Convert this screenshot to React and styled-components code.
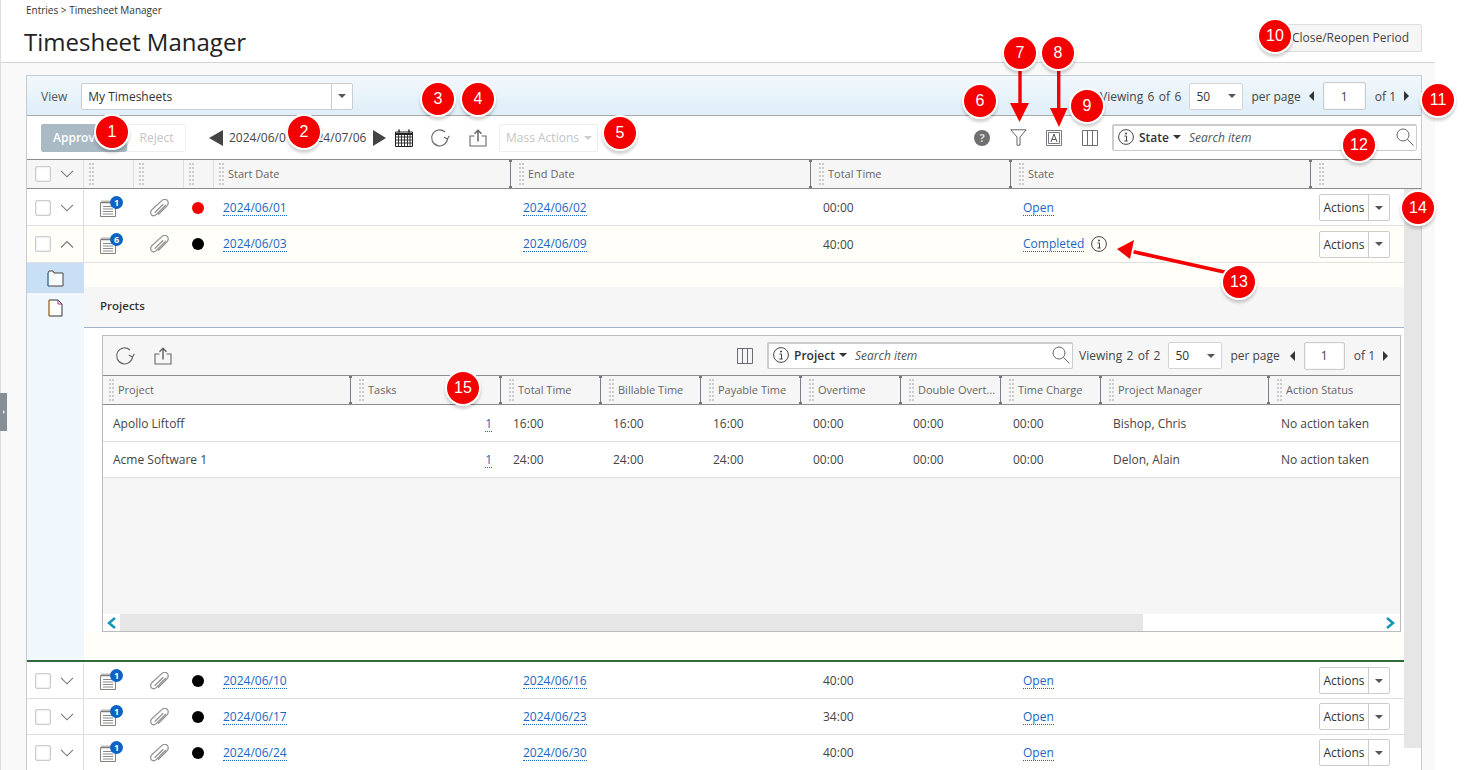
import React from "react";
import styled, { createGlobalStyle } from "styled-components";

const GlobalStyle = createGlobalStyle`
  html, body {
    margin: 0;
    height: 770px;
    overflow: hidden;
    background: #fff;
    font-family: "Open Sans", "Liberation Sans", sans-serif;
    font-size: 12px;
    color: #444;
  }
  * { box-sizing: border-box; }
`;

const Shell = styled.div`
  position: relative;
  width: 1435px;
  height: 770px;
  background: #f9f9f9;
  border-left: 1px solid #ddd;
`;

const PageHead = styled.header`
  height: 63px;
  background: #fff;
  border-bottom: 1px solid #d4d4d4;
  padding: 4px 13px 0 23px;
  display: flex;
  justify-content: space-between;
  align-items: flex-start;
`;

const Crumbs = styled.div`
  font-size: 10px;
  line-height: 13px;
  margin-left: 2px;
  color: #333;
`;

const Title = styled.h1`
  margin: 8px 0 0;
  font-size: 24px;
  line-height: 34px;
  font-weight: 400;
  color: #222;
`;

const PeriodButton = styled.button`
  margin-top: 20px;
  width: 142px;
  height: 28px;
  background: #f6f6f6;
  border: 1px solid #ddd;
  border-radius: 2px;
  font: 12px "Open Sans", sans-serif;
  color: #444;
  text-align: right;
  padding: 0 12px 2px 0;
`;

const Panel = styled.section`
  margin: 12px 13px 0 25px;
  border: 1px solid #c4ccd2;
  border-bottom: 0;
  background: #fff;
  height: 695px;
  overflow: hidden;
`;

const TopBar = styled.div`
  height: 40px;
  display: flex;
  align-items: center;
  justify-content: space-between;
  padding: 1px 12px 0 14px;
  background: linear-gradient(#f1f8fc, #dfeef8);
  border-bottom: 1px solid #aaa;
`;

const Inline = styled.div`
  display: flex;
  align-items: center;
  gap: ${(p) => p.$gap || 0}px;
`;

const ViewLabel = styled.span`
  margin-right: 1px;
  color: #555;
`;

const ViewSelect = styled.div`
  width: 272px;
  height: 27px;
  display: flex;
  align-items: center;
  background: #fff;
  border: 1px solid #ccc;
  border-radius: 2px;
  padding-left: 6px;
  color: #333;
  & > span:first-child { flex: 1; }
`;

const CaretCell = styled.span`
  width: 21px;
  height: 100%;
  display: flex;
  align-items: center;
  justify-content: center;
  border-left: 1px solid #ccc;
`;

const Caret = styled.i`
  display: inline-block;
  width: 0;
  height: 0;
  border-left: 4px solid transparent;
  border-right: 4px solid transparent;
  border-top: 4px solid ${(p) => p.$color || "#555"};
`;

const Pager = styled.div`
  display: flex;
  align-items: center;
  color: #444;
`;

const ViewingText = styled.span`
  word-spacing: 1.3px;
  margin-left: 6px;
`;

const PageSize = styled.div`
  width: 54px;
  height: 27px;
  margin: 0 8px;
  background: #fff;
  border: 1px solid #d4d4d4;
  border-radius: 2px;
  display: flex;
  align-items: center;
  justify-content: space-between;
  padding: 0 6px;
  color: #333;
`;

const PageInput = styled.div`
  width: ${(p) => p.$w}px;
  height: 28px;
  margin: 0 9px 0 9px;
  background: #fff;
  border: 1px solid #ccc;
  border-radius: 2px;
  box-shadow: inset 0 0 2px #ddd;
  display: flex;
  align-items: center;
  justify-content: center;
`;

const Tri = styled.i`
  display: inline-block;
  width: 0;
  height: 0;
  border-top: ${(p) => p.$s}px solid transparent;
  border-bottom: ${(p) => p.$s}px solid transparent;
  ${(p) => (p.$left ? "border-right" : "border-left")}: ${(p) => p.$w}px solid ${(p) => p.$c || "#333"};
`;

const Toolbar = styled.div`
  height: 44px;
  display: flex;
  align-items: center;
  justify-content: space-between;
  padding: 0 4px 0 14px;
  background: #fff;
  border-bottom: 1px solid #8c8c8c;
`;

const Approve = styled.button`
  width: 86px;
  height: 28px;
  background: #a9bac4;
  border: 0;
  border-radius: 2px;
  color: #fff;
  font: 600 12px "Open Sans", sans-serif;
  text-align: left;
  padding-left: 12px;
`;

const GhostButton = styled.button`
  height: 28px;
  width: ${(p) => p.$w}px;
  margin-left: ${(p) => p.$ml || 0}px;
  background: #fff;
  border: 1px solid #eee;
  border-radius: 2px;
  color: #c4c4c4;
  font: 12px "Open Sans", sans-serif;
  white-space: nowrap;
  display: flex;
  align-items: center;
  justify-content: center;
  gap: 5px;
  padding: 0;
`;

const DateRange = styled.div`
  display: flex;
  align-items: center;
  gap: 6px;
  margin-left: 23px;
  color: #444;
  & > span { margin-right: 1px; }
`;

const IconBtn = styled.span`
  display: inline-flex;
  margin-left: ${(p) => p.$ml || 0}px;
`;

const SearchBox = styled.div`
  width: ${(p) => p.$w}px;
  height: 27px;
  display: flex;
  align-items: center;
  background: #fff;
  border: 1px solid #ccc;
  border-top-width: 2px;
  border-left-width: 2px;
  border-radius: 2px;
  padding: 0 2px 2px 4px;
`;

const SearchField = styled.b`
  font-weight: 600;
  color: #333;
  margin: 0 4px 0 5px;
`;

const SearchHint = styled.em`
  flex: 1;
  margin-left: 8px;
  font-size: 12px;
  color: #555;
`;

const Head = styled.div`
  display: grid;
  grid-template-columns: ${(p) => p.$cols};
  height: 29px;
  padding-left: ${(p) => (p.$inset ? 1 : 0)}px;
  background: #f6f6f6;
  border-bottom: 1px solid #8c8c8c;
`;

const HeadCell = styled.div`
  position: relative;
  display: flex;
  align-items: center;
  padding: 0 0 2px 14px;
  color: #666;
  font-size: 11px;
  white-space: nowrap;
  ${(p) => p.$line && "border-right: 1px solid #ddd;"}
  ${(p) => p.$plain && "padding: 0 0 0 8px; gap: 9px;"}
`;

const Grip = styled.i`
  position: absolute;
  left: 5px;
  top: 3px;
  bottom: 3px;
  width: 5px;
  border-left: 2px dotted #ccc;
  border-right: 2px dotted #ccc;
`;

const Handle = styled.i`
  position: absolute;
  left: -4px;
  top: 0;
  bottom: 0;
  width: 1px;
  background: #85798f;
  &::before, &::after {
    content: "";
    position: absolute;
    left: -1px;
    width: 3px;
    height: 2px;
    background: #777;
  }
  &::before { top: 0; }
  &::after { bottom: 0; }
`;

const Check = styled.span`
  width: 16px;
  height: 16px;
  flex: none;
  background: #fff;
  border: 1px solid #ccc;
  border-radius: 2px;
  box-shadow: inset 0 0 2px #ccc;
`;

const Body = styled.div`
  display: flex;
  align-items: flex-start;
`;

const Rows = styled.div`
  width: 1377px;
`;

const ScrollTrack = styled.div`
  width: 17px;
  height: 559px;
  background: #e6e6e6;
`;

const Row = styled.div`
  display: grid;
  grid-template-columns: ${(p) => p.$cols};
  height: ${(p) => (p.$short ? 36 : 37)}px;
  padding-left: ${(p) => (p.$inset ? 1 : 0)}px;
  padding-top: ${(p) => (p.$nudge ? 1 : 0)}px;
  align-items: center;
  background: ${(p) => (p.$cream ? "#fffef8" : "#fff")};
  border-bottom: 1px solid #e0e0e0;
`;

const SelectCell = styled.div`
  height: 100%;
  display: flex;
  align-items: center;
  gap: 9px;
  padding-left: 8px;
  border-right: 1px solid #ddd;
`;

const IconCell = styled.div`
  display: flex;
  justify-content: center;
  padding-right: ${(p) => p.$shift || 0}px;
`;

const NoteWrap = styled.span`
  position: relative;
  display: inline-flex;
  margin-top: 2px;
`;

const Badge = styled.b`
  position: absolute;
  left: 10px;
  top: -4px;
  width: 13px;
  height: 13px;
  border-radius: 50%;
  background: #0b63c4;
  color: #fff;
  font-size: 9px;
  font-weight: 700;
  line-height: 13px;
  text-align: center;
`;

const Dot = styled.i`
  width: 12px;
  height: 12px;
  border-radius: 50%;
  background: ${(p) => p.$c};
`;

const TextCell = styled.div`
  padding-left: 9px;
  color: #444;
  display: flex;
  align-items: center;
  gap: 7px;
  ${(p) => p.$end && "justify-content: flex-end; padding: 0 12px 0 0;"}
`;

const Link = styled.a`
  color: #1a66c4;
  border-bottom: 1px dotted #1a66c4;
  line-height: 15px;
`;

const ActionsCell = styled.div`
  padding-left: 5px;
`;

const ActionsBtn = styled.div`
  width: 71px;
  height: 27px;
  display: flex;
  align-items: center;
  background: #fff;
  border: 1px solid #ccc;
  border-radius: 2px;
  color: #333;
  & > span:first-child { width: 48px; text-align: center; }
`;

const Expanded = styled.div`
  display: flex;
  height: 399px;
  border-bottom: 2px solid #2d6b3a;
`;

const Rail = styled.div`
  width: 57px;
  flex: none;
  background: #f0f8fd;
`;

const RailTab = styled.div`
  height: 30px;
  display: flex;
  align-items: center;
  justify-content: center;
  background: ${(p) => (p.$on ? "#c8dff5" : "transparent")};
`;

const Detail = styled.div`
  flex: 1;
  min-width: 0;
  background: #fffef8;
  padding-top: 24px;
`;

const DetailHead = styled.div`
  height: 41px;
  padding: 0 0 4px 16px;
  display: flex;
  align-items: center;
  background: #f6f6f6;
  border-bottom: 1px solid #a3b3c7;
  font-weight: 600;
  font-size: 11.5px;
  color: #333;
`;

const DetailBody = styled.div`
  background: #fff;
  padding: 7px 3px 0 18px;
  height: 304px;
`;

const SubPanel = styled.div`
  height: 297px;
  background: #f6f6f6;
  border: 1px solid #bbb;
  display: flex;
  flex-direction: column;
`;

const SubBar = styled.div`
  height: 40px;
  display: flex;
  align-items: center;
  justify-content: space-between;
  padding: 0 12px 0 12px;
  border-bottom: 1px solid #8c8c8c;
`;

const Spacer = styled.div`
  flex: 1;
`;

const HScroll = styled.div`
  height: 17px;
  display: flex;
  align-items: center;
  background: #fff;
`;

const HThumb = styled.div`
  width: 1023px;
  height: 100%;
  margin-left: 17px;
  background: #e6e6e6;
`;

const HEnd = styled.span`
  position: absolute;
  top: 50%;
  transform: translateY(-50%);
  display: inline-flex;
  ${(p) => (p.$right ? "right: 4px;" : "left: 3px;")}
`;

const HScrollWrap = styled.div`
  position: relative;
`;

const EdgeTab = styled.div`
  position: absolute;
  left: -1px;
  top: 393px;
  width: 7px;
  height: 38px;
  background: #878f96;
  display: flex;
  align-items: center;
  justify-content: center;
  &::after {
    content: "";
    width: 0;
    height: 0;
    border-top: 2px solid transparent;
    border-bottom: 2px solid transparent;
    border-left: 2px solid #eee;
  }
`;

const Marker = styled.div`
  position: absolute;
  left: ${(p) => p.$x - 1 - 16}px;
  top: ${(p) => p.$y - 16}px;
  width: 32px;
  height: 32px;
  border-radius: 50%;
  background: #f40000;
  color: #fff;
  font-family: "Liberation Sans", Arial, sans-serif;
  font-size: 16px;
  line-height: 32px;
  text-align: center;
  box-shadow: 0 0 0 2px #fff, 0 3px 3px 2px rgba(0, 0, 0, 0.18);
`;

const ArrowLayer = styled.svg`
  position: absolute;
  left: -1px;
  top: 0;
  pointer-events: none;
`;

// icons
const Chevron = ({ up }) => (
  <svg width="14" height="8" viewBox="0 0 14 8" fill="none" stroke="#777" strokeWidth="1.1">
    <path d={up ? "M1 7.5 7 1.5l6 6" : "M1 .8l6 6 6-6"} />
  </svg>
);
const NoteIcon = () => (
  <svg width="17" height="17" viewBox="0 0 17 17" fill="none">
    <path d="M.5 2.500h15v14H.5z" fill="#fff" stroke="#8a7f76" />
    <path d="M2 .5v3M4 .5v3M6 .5v3M8 .5v3M10 .5v3" stroke="#777" />
    <path d="M3 6.500h10M3 9h10M3 11.500h10M3 14h10" stroke="#8a8a8a" />
  </svg>
);
const ClipIcon = () => (
  <svg width="19" height="18" viewBox="1 .4 16.500 15.400" fill="none" stroke="#939393" strokeWidth="1.100">
    <path d="M14.800 5.500 6.600 13.600c-1.300 1.300-3.200 1.400-4.300.3s-1-3 .3-4.300L11 1.900c1.500-1.500 3.800-1.600 5-.4s1.100 3.500-.4 5L8 14" />
    <path d="M12.500 4.800 5 12.200" />
  </svg>
);
const Refresh = () => (
  <svg width="20" height="20" viewBox="0 0 20 20" fill="none" stroke="#666" strokeWidth="1.100">
    <path d="M17.600 10a8 8 0 1 1-2.600-6" />
    <path d="M13.800 9.400l3.800 1.600 1.600-3.400" transform="rotate(8 17 9)" />
  </svg>
);
const Share = () => (
  <svg width="18" height="18" viewBox="0 0 18 18" fill="none" stroke="#666" strokeWidth="1.100">
    <path d="M5.500 7H1v10h16V7h-4.500" />
    <path d="M9 12.500V1.500M5.500 4.800 9 1.300l3.500 3.500" strokeWidth="1.500" />
  </svg>
);
const Calendar = () => (
  <svg width="18" height="18" viewBox="0 0 18 18" fill="none" stroke="#222">
    <path d="M.5 3h17v14.500H.5z" />
    <path d="M.5 5h17" strokeWidth="2" />
    <path d="M.5 8h17M.5 11h17M.5 14h17M3.500 5v12M6.500 5v12M9.500 5v12M12.500 5v12M15 5v12" strokeWidth=".9" />
    <path d="M4 .5v3M14 .5v3" strokeWidth="1.500" />
  </svg>
);
const Help = () => (
  <svg width="16" height="16" viewBox="0 0 16 16">
    <circle cx="8" cy="8" r="8" fill="#6f6f6f" />
    <text x="8" y="12" textAnchor="middle" fontSize="11" fontWeight="700" fontFamily="Open Sans, sans-serif" fill="#ddd">?</text>
  </svg>
);
const Funnel = () => (
  <svg width="17" height="17" viewBox="0 0 17 17" fill="none" stroke="#666">
    <path d="M.8.8h15.400L10 8v8.200H7V8z" />
  </svg>
);
const AutoBox = () => (
  <svg width="16" height="16" viewBox="0 0 16 16" fill="none" stroke="#7a7a86">
    <path d="M.5.5h15v15H.500z" />
    <path d="M2.500 2.500h11v11h-11z" />
    <path d="M5 12l3-8 3 8M6 9.500h4" stroke="#555" />
  </svg>
);
const Columns = () => (
  <svg width="16" height="16" viewBox="0 0 16 16" fill="none" stroke="#6e6a78">
    <path d="M.5.5h15v15H.500zM5.500.5v15M10.500.5v15" />
  </svg>
);
const InfoIcon = ({ size = 16 }) => (
  <svg width={size} height={size} viewBox="0 0 16 16" fill="none" stroke="#444">
    <circle cx="8" cy="8" r="7.400" />
    <circle cx="8" cy="4.500" r="1" fill="#444" stroke="none" />
    <path d="M6.500 7h2v5M6.300 12h3.400" />
  </svg>
);
const Lens = () => (
  <svg width="18" height="18" viewBox="0 0 18 18" fill="none" stroke="#666">
    <circle cx="7" cy="7" r="6" />
    <path d="M11.500 11.500l6 6" />
  </svg>
);
const Folder = () => (
  <svg width="17" height="17" viewBox="0 0 17 17" fill="none">
    <path d="M1 3V16h15V3H7L6 1H2z" fill="#f8fbfe" stroke="#444" />
    <path d="M1 3v13" stroke="#3f8fd8" />
  </svg>
);
const FileIcon = () => (
  <svg width="15" height="18" viewBox="0 0 15 18" fill="none">
    <path d="M1 1h9l4 4v12H1z" fill="#fff" stroke="#333" />
    <path d="M1 1v16" stroke="#e09a3a" />
    <path d="M10 1v4h4" stroke="#a0308a" />
  </svg>
);
const Teal = ({ right }) => (
  <svg width="11" height="12" viewBox="0 0 11 12" fill="none" stroke="#1197b8" strokeWidth="2.500">
    <path d={right ? "M2 1l6 5-6 5" : "M9 1 3 6l6 5"} />
  </svg>
);

const mainCols = "57px 50px 50px 30px 300px 300px 200px 300px 1fr";
const subCols = "250px 150px 100px 100px 100px 100px 100px 100px 168px 1fr";

const timesheets = [
  { start: "2024/06/01", end: "2024/06/02", time: "00:00", state: "Open", notes: 1, dot: "#f40000", nudge: true },
  { start: "2024/06/03", end: "2024/06/09", time: "40:00", state: "Completed", notes: 6, dot: "#000", open: true },
  { start: "2024/06/10", end: "2024/06/16", time: "40:00", state: "Open", notes: 1, dot: "#000", nudge: true },
  { start: "2024/06/17", end: "2024/06/23", time: "34:00", state: "Open", notes: 1, dot: "#000", short: true },
  { start: "2024/06/24", end: "2024/06/30", time: "40:00", state: "Open", notes: 1, dot: "#000", short: true },
];

const subHeads = ["Project", "Tasks", "Total Time", "Billable Time", "Payable Time", "Overtime", "Double Overt...", "Time Charge", "Project Manager", "Action Status"];
const projects = [
  ["Apollo Liftoff", "1", "16:00", "16:00", "16:00", "00:00", "00:00", "00:00", "Bishop, Chris", "No action taken"],
  ["Acme Software 1", "1", "24:00", "24:00", "24:00", "00:00", "00:00", "00:00", "Delon, Alain", "No action taken"],
];

const markers = [
  [1, 112, 132], [2, 304, 132], [3, 438, 99], [4, 478, 99], [5, 620, 133],
  [6, 980, 101], [7, 1020, 53], [8, 1058, 53], [9, 1087, 106], [10, 1275, 36],
  [11, 1438, 100], [12, 1359, 145], [13, 1239, 282], [14, 1418, 208], [15, 463, 388],
];

const TimesheetRow = ({ item }) => (
  <Row $cols={mainCols} $cream={item.open} $short={item.short} $nudge={item.nudge}>
    <SelectCell>
      <Check />
      <Chevron up={item.open} />
    </SelectCell>
    <IconCell $shift={1}>
      <NoteWrap>
        <NoteIcon />
        <Badge>{item.notes}</Badge>
      </NoteWrap>
    </IconCell>
    <IconCell>
      <ClipIcon />
    </IconCell>
    <IconCell $shift={2}>
      <Dot $c={item.dot} />
    </IconCell>
    <TextCell><Link>{item.start}</Link></TextCell>
    <TextCell><Link>{item.end}</Link></TextCell>
    <TextCell>{item.time}</TextCell>
    <TextCell>
      <Link>{item.state}</Link>
      {item.open && <InfoIcon />}
    </TextCell>
    <ActionsCell>
      <ActionsBtn>
        <span>Actions</span>
        <CaretCell><Caret /></CaretCell>
      </ActionsBtn>
    </ActionsCell>
  </Row>
);

const ProjectsDetail = () => (
  <Expanded>
    <Rail>
      <RailTab $on><Folder /></RailTab>
      <RailTab><FileIcon /></RailTab>
    </Rail>
    <Detail>
      <DetailHead>Projects</DetailHead>
      <DetailBody>
        <SubPanel>
          <SubBar>
            <Inline $gap={19}>
              <Refresh />
              <Share />
            </Inline>
            <Inline>
              <Columns />
              <IconBtn $ml={14} />
              <SearchBox $w={306}>
                <InfoIcon size={16} />
                <SearchField>Project</SearchField>
                <Caret $color="#333" />
                <SearchHint>Search item</SearchHint>
                <Lens />
              </SearchBox>
              <Pager>
                <ViewingText>Viewing 2 of 2</ViewingText>
                <PageSize>50<Caret /></PageSize>
                <span>per page</span>
                <IconBtn $ml={10}><Tri $left $s={5} $w={5} /></IconBtn>
                <PageInput $w={41}>1</PageInput>
                <span>of 1</span>
                <IconBtn $ml={8}><Tri $s={5} $w={5} /></IconBtn>
              </Pager>
            </Inline>
          </SubBar>
          <Head $cols={subCols} $inset>
            {subHeads.map((h, i) => (
              <HeadCell key={h}>
                <Grip />
                {i > 0 && <Handle />}
                {h}
              </HeadCell>
            ))}
          </Head>
          {projects.map((p, r) => (
            <Row key={p[0]} $cols={subCols} $short={r === 1} $inset $nudge={r === 0}>
              {p.map((v, i) => (
                <TextCell key={i} $end={i === 1}>
                  {i === 1 ? <Link>{v}</Link> : v}
                </TextCell>
              ))}
            </Row>
          ))}
          <Spacer />
          <HScrollWrap>
            <HScroll><HThumb /></HScroll>
            <HEnd><Teal /></HEnd>
            <HEnd $right><Teal right /></HEnd>
          </HScrollWrap>
        </SubPanel>
      </DetailBody>
    </Detail>
  </Expanded>
);

export default function App() {
  return (
    <Shell>
      <GlobalStyle />
      <PageHead>
        <div>
          <Crumbs>Entries &gt; Timesheet Manager</Crumbs>
          <Title>Timesheet Manager</Title>
        </div>
        <PeriodButton>Close/Reopen Period</PeriodButton>
      </PageHead>

      <Panel>
        <TopBar>
          <Inline $gap={13}>
            <ViewLabel>View</ViewLabel>
            <ViewSelect>
              <span>My Timesheets</span>
              <CaretCell><Caret /></CaretCell>
            </ViewSelect>
          </Inline>
          <Pager>
            <ViewingText>Viewing 6 of 6</ViewingText>
            <PageSize>50<Caret /></PageSize>
            <span>per page</span>
            <IconBtn $ml={8}><Tri $left $s={5} $w={5} /></IconBtn>
            <PageInput $w={43}>1</PageInput>
            <span>of 1</span>
            <IconBtn $ml={8}><Tri $s={5} $w={5} /></IconBtn>
          </Pager>
        </TopBar>

        <Toolbar>
          <Inline>
            <Approve>Approve</Approve>
            <GhostButton $w={59}>Reject</GhostButton>
            <DateRange>
              <Tri $left $s={8} $w={14} $c="#444" />
              <span>2024/06/01 - 2024/07/06</span>
              <Tri $s={8} $w={13} $c="#444" />
            </DateRange>
            <IconBtn $ml={9}><Calendar /></IconBtn>
            <IconBtn $ml={17}><Refresh /></IconBtn>
            <IconBtn $ml={19}><Share /></IconBtn>
            <GhostButton $w={99} $ml={12}>Mass Actions <Caret $color="#ccc" /></GhostButton>
          </Inline>
          <Inline>
            <Help />
            <IconBtn $ml={20}><Funnel /></IconBtn>
            <IconBtn $ml={19}><AutoBox /></IconBtn>
            <IconBtn $ml={20}><Columns /></IconBtn>
            <IconBtn $ml={14} />
            <SearchBox $w={305}>
              <InfoIcon size={16} />
              <SearchField>State</SearchField>
              <Caret $color="#333" />
              <SearchHint>Search item</SearchHint>
              <Lens />
            </SearchBox>
          </Inline>
        </Toolbar>

        <Head $cols={mainCols}>
          <HeadCell $plain $line>
            <Check />
            <Chevron />
          </HeadCell>
          <HeadCell $line><Grip /></HeadCell>
          <HeadCell $line><Grip /></HeadCell>
          <HeadCell $line><Grip /></HeadCell>
          <HeadCell><Grip />Start Date</HeadCell>
          <HeadCell><Handle /><Grip />End Date</HeadCell>
          <HeadCell><Handle /><Grip />Total Time</HeadCell>
          <HeadCell><Handle /><Grip />State</HeadCell>
          <HeadCell><Handle /><Grip /></HeadCell>
        </Head>

        <Body>
          <Rows>
            {timesheets.map((t) => (
              <React.Fragment key={t.start}>
                <TimesheetRow item={t} />
                {t.open && <ProjectsDetail />}
              </React.Fragment>
            ))}
          </Rows>
          <ScrollTrack />
        </Body>
      </Panel>

      <EdgeTab />

      <ArrowLayer width="1468" height="770" viewBox="0 0 1468 770" fill="#f40000" stroke="none">
        <path d="M1018.300 66h3.400v38h-3.400z" />
        <path d="M1010 103h19l-9.500 19z" />
        <path d="M1057 66h3.400v43H1057z" />
        <path d="M1050 108h17.500l-8.500 19z" />
        <path d="M1226 270.500l-.9 3.600-92-20.500.9-3.600z" />
        <path d="M1117 249l17-9-4 19z" />
      </ArrowLayer>

      {markers.map(([n, x, y]) => (
        <Marker key={n} $x={x} $y={y}>{n}</Marker>
      ))}
    </Shell>
  );
}
